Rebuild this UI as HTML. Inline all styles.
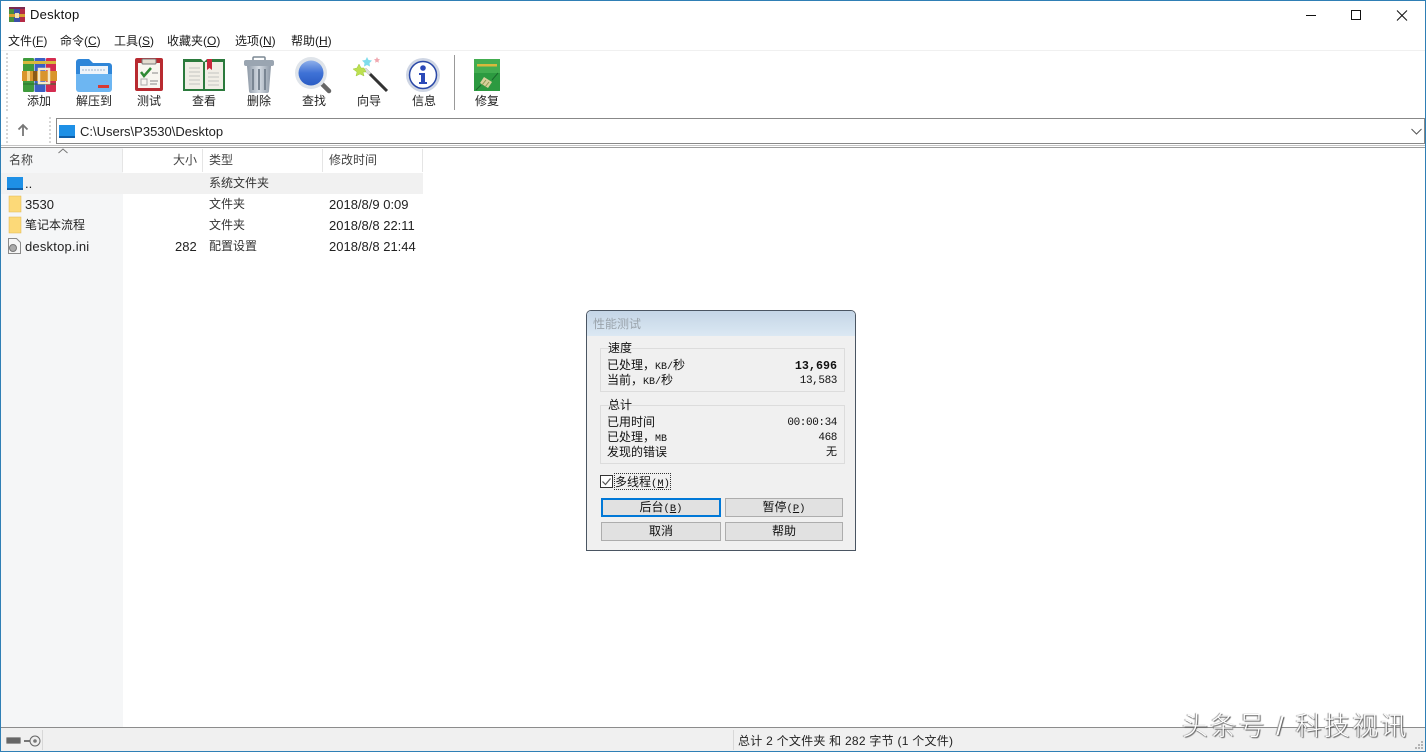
<!DOCTYPE html>
<html lang="zh"><head><meta charset="utf-8"><title>Desktop</title>
<style>
html,body{margin:0;padding:0;width:1426px;height:752px;overflow:hidden;background:#fff}
body{position:relative;font-family:"Liberation Sans","Noto Sans CJK SC",sans-serif;font-size:12px;color:#1a1a1a}
.a{position:absolute;white-space:nowrap;line-height:16px}
.b{position:absolute}
.tb{position:absolute;top:93px;width:56px;text-align:center;line-height:16px;font-size:12px;color:#222}
svg{position:absolute;overflow:visible}
.d{position:absolute;white-space:nowrap;line-height:15px;font-family:"Liberation Mono","Noto Sans CJK SC",monospace;font-size:12px;color:#111}
.n{font-size:11px;text-align:right;letter-spacing:-.4px}
.btn{position:absolute;width:118px;height:17px;background:#e1e1e1;border:1px solid #adadad;text-align:center;line-height:19px;font-family:"Liberation Mono","Noto Sans CJK SC",monospace;font-size:12px;color:#111}
.btn span{font-size:10.5px}
.grp{position:absolute;left:600px;width:243px;background:#f0f0f0;border:1px solid #dcdcdc}
.dl{position:absolute;width:0;border-left:2px dotted #d6d6d6}
</style></head><body>
<!-- window border -->
<div class="b" style="left:0;top:0;width:1424px;height:750px;border:1px solid #2f7fb5;z-index:9;pointer-events:none"></div>

<!-- title -->
<svg style="left:9px;top:7px" width="16" height="15" viewBox="0 0 16 15">
<rect width="5" height="15" fill="#4a8f3c"/><rect x="5" width="6" height="15" fill="#3c4fa8"/><rect x="11" width="5" height="15" fill="#b52a45"/>
<rect width="16" height="2" fill="#7a2a50"/><rect y="7" width="16" height="3" fill="#d9a030"/><rect x="6" y="6" width="4" height="5" fill="#f3e2b0"/></svg>
<div class="a" style="left:30px;top:7px;font-size:13px;letter-spacing:.25px;color:#111">Desktop</div>
<svg style="left:1300px;top:0" width="126" height="30" fill="none" stroke="#111" stroke-width="1">
<path d="M6 15.500H16"/><rect x="51.500" y="10.500" width="9" height="9"/><path d="M97 10.500L107 20.500M107 10.500L97 20.500"/></svg>

<!-- menu -->
<div class="a" style="left:8px;top:33px">文件(<u>F</u>)</div>
<div class="a" style="left:60px;top:33px">命令(<u>C</u>)</div>
<div class="a" style="left:114px;top:33px">工具(<u>S</u>)</div>
<div class="a" style="left:167px;top:33px">收藏夹(<u>O</u>)</div>
<div class="a" style="left:235px;top:33px">选项(<u>N</u>)</div>
<div class="a" style="left:291px;top:33px">帮助(<u>H</u>)</div>
<div class="b" style="left:1px;top:50px;width:1424px;height:1px;background:#f0f0f0"></div>
<div class="dl" style="left:6px;top:53px;height:58px"></div>

<!-- toolbar icons -->
<svg style="left:23px;top:58px" width="34" height="34" viewBox="0 0 34 34">
<rect x="0" y="0" width="11" height="34" rx="1" fill="#3f9b3c"/><rect x="11.500" y="0" width="11" height="34" rx="1" fill="#3a5fc4"/><rect x="23" y="0" width="10" height="34" rx="1" fill="#d42c50"/>
<rect x="0" y="3" width="33" height="3" fill="#d8b83c"/><rect x="0" y="25" width="33" height="2" fill="#2b6e2b" opacity=".5"/>
<rect x="-1" y="13" width="35" height="10" fill="#d9952c"/><rect x="4" y="13" width="3" height="10" fill="#f4d48a"/><rect x="16" y="11" width="10" height="14" fill="none" stroke="#f5e9c8" stroke-width="2.500"/><rect x="10" y="13" width="4" height="10" fill="#8a5a16"/></svg>
<svg style="left:76px;top:58px" width="36" height="34" viewBox="0 0 36 34">
<path d="M0 4a3 3 0 0 1 3-3h10l4 4h16a3 3 0 0 1 3 3v22a3 3 0 0 1-3 3H3a3 3 0 0 1-3-3z" fill="#2f86d8"/>
<rect x="4" y="8" width="28" height="12" fill="#eef4fa"/><path d="M6 12h24" stroke="#9db4cc" stroke-dasharray="2 1"/>
<path d="M0 16h36v15a3 3 0 0 1-3 3H3a3 3 0 0 1-3-3z" fill="#6db6f2"/><rect x="22" y="27" width="11" height="3" fill="#d83a34"/></svg>
<svg style="left:135px;top:58px" width="28" height="34" viewBox="0 0 28 34">
<rect width="28" height="33" rx="2" fill="#b82a30"/><rect x="3" y="5" width="22" height="25" fill="#f8f6f0"/><rect x="7" y="1" width="14" height="5" rx="1" fill="#e4dcd0" stroke="#777"/>
<path d="M6 14l3 4 7-8" fill="none" stroke="#2f8a34" stroke-width="2.500"/><rect x="6" y="21" width="6" height="6" fill="none" stroke="#aaa"/><path d="M15 23h8M15 26h7M17 15h6" stroke="#888"/></svg>
<svg style="left:183px;top:59px" width="42" height="32" viewBox="0 0 42 32">
<path d="M0 0h18l3 3 3-3h18v32H0z" fill="#2b7a3c"/><path d="M2 3h18v27H2zM22 3h18v27H22z" fill="#f1eee6"/>
<path d="M6 9h11M6 13h11M6 17h11M6 21h11M6 25h11M25 14h11M25 18h11M25 22h11M25 26h11" stroke="#c4c4c0"/><path d="M24 0h5v11l-2.500-2-2.500 2z" fill="#c9283c"/></svg>
<svg style="left:244px;top:57px" width="30" height="36" viewBox="0 0 30 36">
<defs><linearGradient id="tg" x1="0" x2="1" y1="0" y2="0"><stop offset="0" stop-color="#8e99a6"/><stop offset=".5" stop-color="#d4dbe3"/><stop offset="1" stop-color="#8e99a6"/></linearGradient></defs>
<rect x="9" y="0" width="12" height="4" rx="1" fill="none" stroke="#7c8894" stroke-width="1.500"/><rect x="0" y="3" width="30" height="6" rx="2" fill="#9aa5b1"/>
<path d="M3 9h24l-2 25a2 2 0 0 1-2 2H7a2 2 0 0 1-2-2z" fill="url(#tg)"/><path d="M9 12v21M15 12v21M21 12v21" stroke="#7a8693" stroke-width="2"/></svg>
<svg style="left:295px;top:57px" width="37" height="37" viewBox="0 0 37 37">
<defs><linearGradient id="lg" x1="0" x2="0" y1="0" y2="1"><stop offset="0" stop-color="#8fb0ea"/><stop offset=".5" stop-color="#3f72d6"/><stop offset="1" stop-color="#2a5cc4"/></linearGradient></defs>
<path d="M24 24l10 10" stroke="#666" stroke-width="4.500" stroke-linecap="round"/><circle cx="16" cy="16" r="16" fill="#dfe4ea"/><circle cx="16" cy="16" r="12.500" fill="url(#lg)"/></svg>
<svg style="left:352px;top:57px" width="37" height="36" viewBox="0 0 37 36">
<path d="M13 12l22 22" stroke="#333" stroke-width="3"/><path d="M13 12l5 5" stroke="#ddd" stroke-width="3"/>
<path d="M12 11l2 4-3 0 1 4-4-2-4 2 1-4-4-3 4-1 2-4 2 4z" fill="#bde050" stroke="#9bc83c" stroke-width=".500"/>
<path d="M15 0l1.500 3 3.500.500-2.500 2.500.500 3.500-3-1.500-3 1.500.500-3.500-2.500-2.500 3.500-.500z" fill="#7fdcec"/>
<path d="M25 0l1 2 2 .300-1.500 1.500.300 2-1.800-1-1.800 1 .300-2L22 2.300 24 2z" fill="#f0a8b0"/></svg>
<svg style="left:406px;top:57px" width="34" height="36" viewBox="0 0 34 36">
<circle cx="17" cy="18" r="17" fill="#cfd6e4"/><circle cx="17" cy="18" r="13.500" fill="#fff" stroke="#2b49a8" stroke-width="1.500"/><circle cx="17" cy="11" r="2.800" fill="#2b49b8"/><path d="M13 16h6v9h2v2h-8v-2h2v-7h-2z" fill="#2b49b8"/></svg>
<div class="b" style="left:454px;top:55px;width:1px;height:55px;background:#999"></div>
<svg style="left:474px;top:59px" width="26" height="32" viewBox="0 0 26 32">
<rect width="26" height="32" fill="#2c9a40"/><rect y="0" width="26" height="14" fill="#43ad50"/><rect x="3" y="5" width="20" height="2.500" fill="#d8b83c"/>
<path d="M10 18l8 5-4 6-8-5z" fill="#d8d09a"/><path d="M12 21l-4 5M15 23l-4 5" stroke="#8a9a50"/><path d="M18 21l6-7M2 31l5-5" stroke="#1a6a2c"/></svg>

<div class="tb" style="left:11px">添加</div>
<div class="tb" style="left:66px">解压到</div>
<div class="tb" style="left:121px">测试</div>
<div class="tb" style="left:176px">查看</div>
<div class="tb" style="left:231px">删除</div>
<div class="tb" style="left:286px">查找</div>
<div class="tb" style="left:341px">向导</div>
<div class="tb" style="left:396px">信息</div>
<div class="tb" style="left:459px">修复</div>

<!-- address bar -->
<div class="dl" style="left:6px;top:117px;height:26px"></div>
<div class="dl" style="left:49px;top:117px;height:26px"></div>
<svg style="left:17px;top:123px" width="12" height="13" fill="none" stroke="#777" stroke-width="1.800"><path d="M6 13V2M1.500 6.500L6 2l4.500 4.500"/></svg>
<div class="b" style="left:56px;top:118px;width:1367px;height:24px;border:1px solid #888;background:#fff"></div>
<svg style="left:59px;top:125px" width="16" height="13"><rect width="16" height="13" fill="#1e90e6"/><rect y="11" width="16" height="2" fill="#0f5ea8"/></svg>
<div class="a" style="left:80px;top:124px;font-size:13px;color:#222">C:\Users\P3530\Desktop</div>
<svg style="left:1411px;top:128px" width="11" height="7" fill="none" stroke="#555"><path d="M.5 1l5 5 5-5"/></svg>
<div class="b" style="left:1px;top:145px;width:1424px;height:1px;background:#c4c4c4"></div>
<div class="b" style="left:1px;top:147px;width:1424px;height:1px;background:#9a9a9a"></div>

<!-- list -->
<div class="b" style="left:1px;top:148px;width:122px;height:579px;background:#f5f6f7"></div>
<div class="b" style="left:1px;top:173px;width:422px;height:21px;background:#f1f1f1"></div>
<div class="b" style="left:122px;top:149px;width:1px;height:23px;background:#e5e5e5"></div>
<div class="b" style="left:202px;top:149px;width:1px;height:23px;background:#e5e5e5"></div>
<div class="b" style="left:322px;top:149px;width:1px;height:23px;background:#e5e5e5"></div>
<div class="b" style="left:422px;top:149px;width:1px;height:23px;background:#e5e5e5"></div>
<svg style="left:58px;top:148px" width="10" height="6" fill="none" stroke="#777"><path d="M.5 5L5 1l4.500 4"/></svg>
<div class="a" style="left:9px;top:152px;color:#444">名称</div>
<div class="a" style="left:173px;top:152px;color:#444">大小</div>
<div class="a" style="left:209px;top:152px;color:#444">类型</div>
<div class="a" style="left:329px;top:152px;color:#444">修改时间</div>

<svg style="left:7px;top:177px" width="16" height="13"><rect width="16" height="13" fill="#1e90e6"/><rect y="11" width="16" height="2" fill="#0f5ea8"/></svg>
<div class="a" style="left:25px;top:176px;font-size:13px">..</div>
<div class="a" style="left:209px;top:175px;color:#333">系统文件夹</div>

<svg style="left:9px;top:196px" width="12" height="16"><rect width="12" height="16" fill="#fcd978" stroke="#e0b850" stroke-width=".500"/></svg>
<div class="a" style="left:25px;top:197px;font-size:13px;color:#222">3530</div>
<div class="a" style="left:209px;top:196px;color:#333">文件夹</div>
<div class="a" style="left:329px;top:197px;font-size:13px;color:#222">2018/8/9 0:09</div>

<svg style="left:9px;top:217px" width="12" height="16"><rect width="12" height="16" fill="#fcd978" stroke="#e0b850" stroke-width=".500"/></svg>
<div class="a" style="left:25px;top:217px;color:#222">笔记本流程</div>
<div class="a" style="left:209px;top:217px;color:#333">文件夹</div>
<div class="a" style="left:329px;top:218px;font-size:13px;color:#222">2018/8/8 22:11</div>

<svg style="left:8px;top:238px" width="13" height="16" fill="none"><path d="M.5.500h8l4 4v11H.5z" fill="#f6f6f6" stroke="#8a8a8a"/><circle cx="5" cy="10" r="3.500" fill="#aaa" stroke="#777"/></svg>
<div class="a" style="left:25px;top:239px;font-size:13px;letter-spacing:.2px;color:#222">desktop.ini</div>
<div class="a" style="left:175px;top:239px;font-size:13px;color:#222">282</div>
<div class="a" style="left:209px;top:238px;color:#333">配置设置</div>
<div class="a" style="left:329px;top:239px;font-size:13px;color:#222">2018/8/8 21:44</div>

<!-- dialog -->
<div class="b" style="left:586px;top:310px;width:268px;height:239px;background:#f0f0f0;border:1px solid #4a5562;border-radius:5px 5px 0 0"></div>
<div class="b" style="left:587px;top:311px;width:268px;height:25px;background:linear-gradient(#c4d5e6,#dbe8f3);border-radius:4px 4px 0 0"></div>
<div class="d" style="left:593px;top:318px;color:#9aa3ab">性能测试</div>

<div class="grp" style="top:348px;height:42px"></div>
<div class="d" style="left:605px;top:342px;padding:0 3px">速度</div>
<div class="d" style="left:607px;top:359px">已处理，<span style="font-size:10px">KB/</span>秒</div>
<div class="d" style="left:607px;top:374px">当前，<span style="font-size:10px">KB/</span>秒</div>
<div class="d" style="left:737px;width:100px;top:359px;text-align:right;font-weight:bold;font-size:11.7px">13,696</div>
<div class="d n" style="left:737px;width:100px;top:374px">13,583</div>

<div class="grp" style="top:405px;height:57px"></div>
<div class="d" style="left:605px;top:399px;padding:0 3px">总计</div>
<div class="d" style="left:607px;top:416px">已用时间</div>
<div class="d" style="left:607px;top:431px">已处理，<span style="font-size:10px">MB</span></div>
<div class="d" style="left:607px;top:446px">发现的错误</div>
<div class="d n" style="left:737px;width:100px;top:416px">00:00:34</div>
<div class="d n" style="left:737px;width:100px;top:431px">468</div>
<div class="d n" style="left:737px;width:100px;top:446px;letter-spacing:0">无</div>

<svg style="left:600px;top:475px" width="13" height="13"><rect x=".5" y=".5" width="12" height="12" fill="#fff" stroke="#333"/><path d="M2.500 6.500l3 3 5-6" fill="none" stroke="#555" stroke-width="1.200"/></svg>
<div class="d" style="left:615px;top:474px;outline:1px dotted #333;height:15px;line-height:19px;padding-right:0">多线程<span style="font-size:10.5px">(<u>M</u>)</span></div>

<div class="btn" style="left:601px;top:498px;border:2px solid #0078d7;width:116px;height:15px;line-height:17px">后台<span>(<u>B</u>)</span></div>
<div class="btn" style="left:725px;top:498px;width:116px">暂停<span>(<u>P</u>)</span></div>
<div class="btn" style="left:601px;top:522px">取消</div>
<div class="btn" style="left:725px;top:522px;width:116px">帮助</div>

<!-- status bar -->
<div class="b" style="left:1px;top:727px;width:1424px;height:1px;background:#8c8c8c"></div>
<div class="b" style="left:1px;top:728px;width:1424px;height:23px;background:#f0f0f0"></div>
<div class="b" style="left:42px;top:730px;width:1px;height:20px;background:#d8d8d8"></div>
<div class="b" style="left:733px;top:730px;width:1px;height:20px;background:#d8d8d8"></div>
<svg style="left:6px;top:735px" width="36" height="12">
<rect x=".5" y="2.500" width="14" height="6" rx="1" fill="#666" stroke="#999"/>
<path d="M18 6h7" stroke="#777" stroke-width="2"/><circle cx="29" cy="6" r="5" fill="#eee" stroke="#666"/><circle cx="29" cy="6" r="1.800" fill="#777"/></svg>
<svg style="left:1415px;top:741px" width="9" height="9" fill="#b4b4b4"><rect x="6" y="0" width="2" height="2"/><rect x="3" y="3" width="2" height="2"/><rect x="6" y="3" width="2" height="2"/><rect x="0" y="6" width="2" height="2"/><rect x="3" y="6" width="2" height="2"/><rect x="6" y="6" width="2" height="2"/></svg>
<div class="a" style="left:738px;top:733px;letter-spacing:.25px;color:#222">总计 2 个文件夹 和 282 字节 (1 个文件)</div>

<!-- watermark -->
<div class="a" style="left:1182px;top:711px;line-height:30px;font-size:26px;letter-spacing:2.300px;font-weight:300;color:#fff;text-shadow:1px 1px 1px #555,-1px 0 1px #888;z-index:10">头条号 / 科技视讯</div>
</body></html>
